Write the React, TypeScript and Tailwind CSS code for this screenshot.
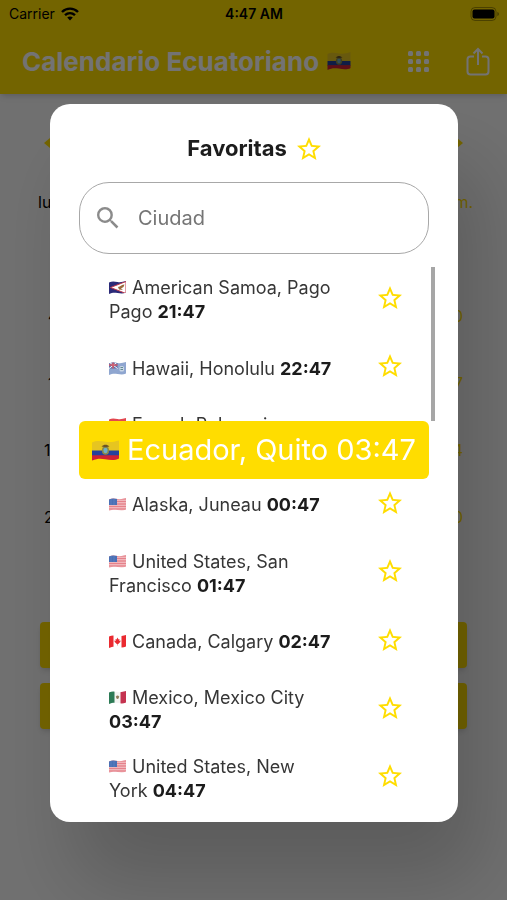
import React from "react";

type FlagCode = "as" | "hi" | "pf" | "us" | "ca" | "mx" | "ec";

function FlagArt({ code }: { code: FlagCode }) {
  switch (code) {
    case "as":
      return (
        <>
          <rect width="34" height="26" fill="#2b2a78" />
          <path d="M34 1 34 25 3 13Z" fill="#fff" stroke="#c23a4a" strokeWidth="2" />
          <path d="M18 12c5-1 8-5 13-5l-2 5-5 3 4 3-8-1Z" fill="#9a6a3c" />
        </>
      );
    case "hi":
      return (
        <>
          <rect width="34" height="26" fill="#8fa6d0" />
          <rect width="17" height="13" fill="#5d6fa8" />
          <path d="M0 0 17 13M17 0 0 13" stroke="#fff" strokeWidth="2" />
          <path d="M8 0v13M0 6h17" stroke="#d25a6a" strokeWidth="3" />
          <rect x="21" y="8" width="9" height="11" rx="3" fill="#c9d6e6" />
          <path d="M23 11h5M23 15h5" stroke="#5f8a8f" strokeWidth="2" />
        </>
      );
    case "pf":
      return (
        <>
          <rect width="34" height="26" fill="#fff" />
          <rect width="34" height="7" fill="#e2474f" />
          <rect y="19" width="34" height="7" fill="#e2474f" />
          <circle cx="17" cy="13" r="5" fill="#4a7fc1" />
        </>
      );
    case "us":
      return (
        <>
          <rect width="34" height="26" fill="#f4c9cd" />
          <path d="M0 2h34M0 7h34M0 12h34M0 17h34M0 22h34" stroke="#e5828b" strokeWidth="2.6" />
          <rect width="16" height="14" fill="#4a70b5" />
          <path d="M2 4h12M2 8h12M2 12h12" stroke="#8aa5d6" strokeWidth="1" strokeDasharray="1 2" />
        </>
      );
    case "ca":
      return (
        <>
          <rect width="34" height="26" fill="#fff" />
          <rect width="9" height="26" fill="#ea2a30" />
          <rect x="25" width="9" height="26" fill="#ea2a30" />
          <path d="m17 5 2 4 2-1-.5 4 3-1-1 3-4 4h-1v3h-1v-3h-1l-4-4-1-3 3 1-.5-4 2 1Z" fill="#ea2a30" />
        </>
      );
    case "mx":
      return (
        <>
          <rect width="34" height="26" fill="#f4f4f2" />
          <rect width="11" height="26" fill="#2c7a55" />
          <rect x="23" width="11" height="26" fill="#c53350" />
          <path d="M14 11c1-3 5-3 6 0 0 3-1 5-3 5s-3-2-3-5Z" fill="#8d7b58" />
        </>
      );
    case "ec":
      return (
        <>
          <rect width="34" height="26" fill="#e6c520" />
          <rect y="13" width="34" height="7" fill="#25419c" />
          <rect y="19" width="34" height="7" fill="#cf2233" />
          <ellipse cx="17" cy="13" rx="4.500" ry="5.500" fill="#8a8a4a" />
          <ellipse cx="17" cy="13" rx="2.500" ry="3.500" fill="#6fb0c8" />
          <path d="M12 8c3-3 7-3 10 0l-5 1Z" fill="#6b5426" />
        </>
      );
  }
}

function Flag({ code, className }: { code: FlagCode; className: string }) {
  const clip = React.useId();
  return (
    <svg viewBox="0 0 34 26" className={className} aria-hidden="true">
      <clipPath id={clip}>
        <path d="M0 3C6 0 11 1 17 2s11 0 17-2v23c-6 3-11 2-17 1s-11-1-17 2Z" />
      </clipPath>
      <g clipPath={`url(#${clip})`}>
        <FlagArt code={code} />
      </g>
    </svg>
  );
}

function Star() {
  return (
    <svg viewBox="2 2 20 19" className="h-[23px] w-6" fill="#ffdd00" aria-hidden="true">
      <path d="m22 9.240-7.190-.620L12 2 9.190 8.630 2 9.240l5.460 4.730L5.820 21 12 17.270 18.180 21l-1.630-7.030L22 9.240zM12 15.400l-3.760 2.270 1-4.280-3.320-2.880 4.380-.380L12 6.100l1.710 4.040 4.380.380-3.320 2.880 1 4.280L12 15.400z" />
    </svg>
  );
}

const cities: { code: FlagCode; name: string; time: string }[] = [
  { code: "as", name: "American Samoa, Pago Pago", time: "21:47" },
  { code: "hi", name: "Hawaii, Honolulu", time: "22:47" },
  { code: "pf", name: "French Polynesia, Papeete", time: "22:47" },
  { code: "us", name: "Alaska, Juneau", time: "00:47" },
  { code: "us", name: "United States, San Francisco", time: "01:47" },
  { code: "ca", name: "Canada, Calgary", time: "02:47" },
  { code: "mx", name: "Mexico, Mexico City", time: "03:47" },
  { code: "us", name: "United States, New York", time: "04:47" },
];

const hours = [
  { left: "4", right: "0", inset: true },
  { left: "1", right: "7", inset: true },
  { left: "1", right: "4", inset: false },
  { left: "2", right: "0", inset: false },
];

function StatusBar() {
  return (
    <div className="grid h-7 grid-cols-3 items-center pr-2 pl-[9px] text-sm text-black">
      <span className="flex items-center gap-1.5">
        Carrier
        <svg viewBox="0 0 18 14" className="h-[14px] w-[18px]" fill="none" stroke="currentColor" aria-hidden="true">
          <path d="M1 5C5.500.500 12.500.500 17 5" strokeWidth="2.400" />
          <path d="M4 8.200c3-2.800 7-2.800 10 0" strokeWidth="2.400" />
          <path d="m9 13.500-2.800-3c1.600-1.400 4-1.400 5.600 0Z" fill="currentColor" stroke="none" />
        </svg>
      </span>
      <span className="text-center font-semibold">4:47 AM</span>
      <svg viewBox="0 0 29 14" className="h-[14px] w-[29px] justify-self-end" aria-hidden="true">
        <rect x="1" y=".5" width="25" height="13" rx="4" fill="none" stroke="#000" strokeOpacity=".35" />
        <rect x="2.500" y="2.500" width="22" height="9" rx="2" />
        <path d="M27.500 5c1.600.500 1.600 3.500 0 4Z" fillOpacity=".5" />
      </svg>
    </div>
  );
}

function CalendarPage() {
  return (
    <div className="flex min-h-screen flex-col bg-[#f8f8f8]">
      <header className="h-[94px] bg-[#ffdd00] shadow-md">
        <StatusBar />
        <div className="flex h-[66px] items-center pr-[17px] pl-[22px] text-white">
          <h1 className="flex flex-1 items-center gap-2 text-[26px] font-bold whitespace-nowrap">
            Calendario Ecuatoriano
            <Flag code="ec" className="h-[18px] w-6" />
          </h1>
          <button aria-label="Vistas" className="mr-[37px]">
            <svg viewBox="0 0 21 21" className="size-[21px]" fill="currentColor" aria-hidden="true">
              {[0, 8, 16].map((y) =>
                [0, 8, 16].map((x) => <rect key={`${x}-${y}`} x={x} y={y} width="5" height="5" rx="1.500" />)
              )}
            </svg>
          </button>
          <button aria-label="Compartir">
            <svg viewBox="0 0 24 29" className="h-[29px] w-6" fill="none" stroke="currentColor" strokeWidth="2" aria-hidden="true">
              <path d="M8 9.500H4.500A3 3 0 0 0 1.500 12.500v12a3 3 0 0 0 3 3h15a3 3 0 0 0 3-3v-12a3 3 0 0 0-3-3H16M12 18V2.500M7.500 6.500l4.500-4.500 4.500 4.500" />
            </svg>
          </button>
        </div>
      </header>
      <main className="flex flex-col px-10 pt-11 text-base text-black">
        <div className="flex justify-between px-1 text-[#ffdd00]">
          <svg viewBox="0 0 12 10" className="h-[10px] w-3" fill="currentColor" aria-hidden="true"><path d="M0 5 6 0v10Z" /></svg>
          <svg viewBox="0 0 12 10" className="h-[10px] w-3" fill="currentColor" aria-hidden="true"><path d="M12 5 6 0v10Z" /></svg>
        </div>
        <div className="-mx-1.5 mt-[42px] flex justify-between pl-1 leading-6">
          <span>lu</span>
          <span className="text-[#ffdd00]">m.</span>
        </div>
        <ul className="mt-[90px] flex flex-col gap-[43px] px-1 leading-6">
          {hours.map((h, i) => (
            <li key={i} className="flex justify-between">
              <span className={h.inset ? "pl-1" : ""}>{h.left}</span>
              <span className="text-[#ffdd00]">{h.right}</span>
            </li>
          ))}
        </ul>
        <div className="mt-[93px] flex flex-col gap-[15px]">
          <button aria-label="Favoritas" className="h-[46px] rounded bg-[#ffdd00] shadow-md" />
          <button aria-label="Ciudades" className="h-[46px] rounded bg-[#ffdd00] shadow-md" />
        </div>
      </main>
    </div>
  );
}

export default function App() {
  return (
    <div className="font-[Inter,'Liberation_Sans',sans-serif]">
      <CalendarPage />
      <div className="fixed inset-0 flex flex-col bg-black/55 pt-[104px] pr-[49px] pb-[78px] pl-[50px]">
        <section
          role="dialog"
          aria-labelledby="dialog-title"
          className="relative flex min-h-0 flex-1 flex-col rounded-[20px] bg-white px-[29px] pt-7 shadow-[24px_60px_80px_rgba(0,0,0,0.18)]"
        >
          <h2 id="dialog-title" className="flex h-8 shrink-0 items-center justify-center gap-2.5 text-[22px] font-bold text-[#1c1c1c]">
            Favoritas
            <Star />
          </h2>
          <label className="mt-[18px] flex h-[72px] shrink-0 items-center gap-[19px] rounded-[30px] border border-[#a8a8a8] px-[17px]">
            <svg viewBox="3 3 18 18" className="size-[22px]" fill="#8b8b8b" aria-hidden="true">
              <path d="M15.500 14h-.790l-.280-.270A6.470 6.470 0 0 0 16 9.500 6.500 6.500 0 1 0 9.500 16c1.610 0 3.090-.590 4.230-1.570l.270.280v.790l5 4.990L20.490 19l-4.990-5zm-6 0C7.010 14 5 11.990 5 9.500S7.010 5 9.500 5 14 7.010 14 9.500 11.990 14 9.500 14z" />
            </svg>
            <input
              aria-label="Ciudad"
              placeholder="Ciudad"
              className="min-w-0 flex-1 text-xl text-[#333] outline-none placeholder:text-[#757575]"
            />
          </label>
          <ul className="mt-[9px] mb-3 flex min-h-0 flex-1 flex-col overflow-hidden px-[30px]">
            {cities.map((c) => (
              <li key={c.name} className="flex min-h-0 flex-1 items-center justify-between gap-6">
                <p className="max-w-[227px] pt-1.5 text-lg leading-6 text-[#363636]">
                  <Flag code={c.code} className="mr-1.5 inline-block h-[13px] w-[17px] align-baseline" />
                  {c.name} <b className="font-bold text-[#1c1c1c]">{c.time}</b>
                </p>
                <button aria-label={`Favorita: ${c.name}`} className="-mr-[3px] shrink-0">
                  <Star />
                </button>
              </li>
            ))}
          </ul>
          <div className="absolute top-[163px] right-[23px] h-[154px] w-1 bg-[#a6a6a6]" />
        </section>
      </div>
      <div className="pointer-events-none fixed inset-0 flex items-center pr-[78px] pl-[79px]">
        <div className="flex h-[58px] flex-1 items-center justify-center gap-2 rounded-md bg-[#ffdd00] text-[29px] whitespace-nowrap text-white">
          <Flag code="ec" className="h-[21px] w-[27px]" />
          Ecuador, Quito 03:47
        </div>
      </div>
    </div>
  );
}
